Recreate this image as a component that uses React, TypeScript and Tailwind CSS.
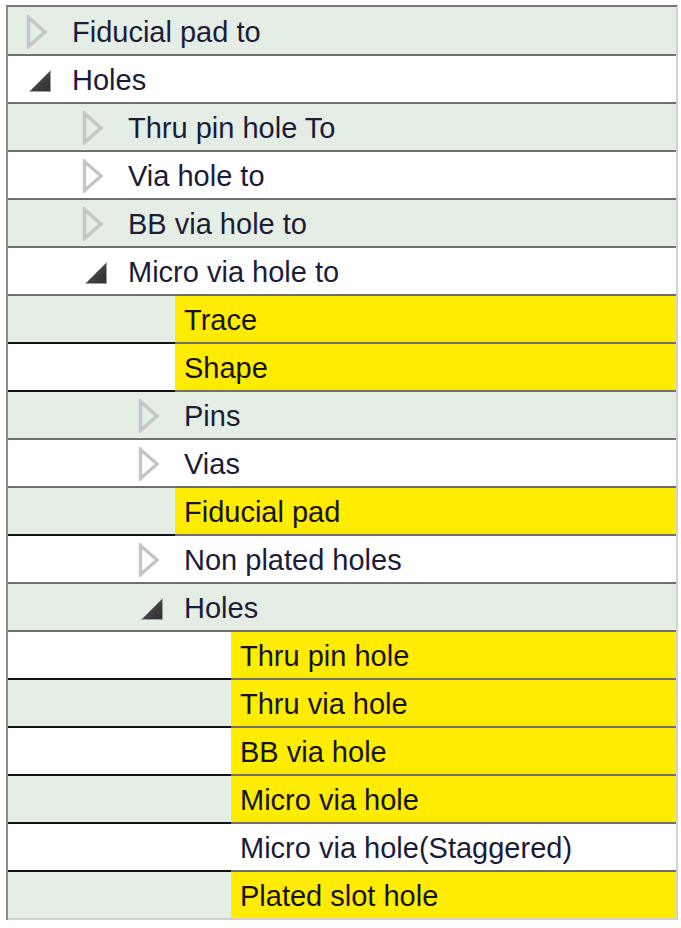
import React from 'react';

type Kind = 'closed' | 'open' | 'leaf';

interface Row {
  label: string;
  level: 0 | 1 | 2 | 3;
  kind: Kind;
  highlight?: boolean;
}

const ROWS: Row[] = [
  { label: 'Fiducial pad to', level: 0, kind: 'closed' },
  { label: 'Holes', level: 0, kind: 'open' },
  { label: 'Thru pin hole To', level: 1, kind: 'closed' },
  { label: 'Via hole to', level: 1, kind: 'closed' },
  { label: 'BB via hole to', level: 1, kind: 'closed' },
  { label: 'Micro via hole to', level: 1, kind: 'open' },
  { label: 'Trace', level: 2, kind: 'leaf', highlight: true },
  { label: 'Shape', level: 2, kind: 'leaf', highlight: true },
  { label: 'Pins', level: 2, kind: 'closed' },
  { label: 'Vias', level: 2, kind: 'closed' },
  { label: 'Fiducial pad', level: 2, kind: 'leaf', highlight: true },
  { label: 'Non plated holes', level: 2, kind: 'closed' },
  { label: 'Holes', level: 2, kind: 'open' },
  { label: 'Thru pin hole', level: 3, kind: 'leaf', highlight: true },
  { label: 'Thru via hole', level: 3, kind: 'leaf', highlight: true },
  { label: 'BB via hole', level: 3, kind: 'leaf', highlight: true },
  { label: 'Micro via hole', level: 3, kind: 'leaf', highlight: true },
  { label: 'Micro via hole(Staggered)', level: 3, kind: 'leaf' },
  { label: 'Plated slot hole', level: 3, kind: 'leaf', highlight: true },
];

const INDENT = ['pl-[17px]', 'pl-[73px]', 'pl-[129px]', 'pl-[185px]'];
const LEAF_GUTTER = ['w-[0px]', 'w-[55px]', 'w-[167px]', 'w-[223px]'];

const ClosedIcon = () => (
  <svg width="22" height="34" viewBox="0 0 22 34">
    <path d="M2.5 2.5 L19 17 L2.5 31.5 Z" fill="none" stroke="#c6c6c6" strokeWidth="3.5" strokeLinejoin="miter" />
  </svg>
);

const OpenIcon = () => (
  <svg width="24" height="24" viewBox="0 0 24 24">
    <defs>
      <linearGradient id="tri" x1="0" y1="0" x2="1" y2="1">
        <stop offset="0" stopColor="#5c5c5c" />
        <stop offset="1" stopColor="#2c2c2c" />
      </linearGradient>
    </defs>
    <polygon points="22.5,1.5 22.5,22.5 1.5,22.5" fill="url(#tri)" stroke="#a0a0a0" strokeWidth="1" />
  </svg>
);

export default function App() {
  return (
    <div className="min-h-screen bg-white pt-[5px] pl-[6px]" style={{ fontFamily: '"Liberation Sans", Arial, sans-serif' }}>
      <div className="w-[672px] border-t-2 border-l-2 border-r-2 border-t-[#767676] border-l-[#8c8c8c] border-r-[#d2d2d2]">
        {ROWS.map((row, i) => {
          const bg = i % 2 === 0 ? 'bg-[#e5eee4]' : 'bg-white';
          const last = i === ROWS.length - 1;
          const grayLine = last ? 'border-[#d2d2d2]' : 'border-[#6f6f6f]';
          const blackLine = last ? 'border-[#d2d2d2]' : 'border-[#111111]';
          const height = i === 0 ? 'h-[49px]' : 'h-[48px]';

          if (row.kind === 'leaf') {
            return (
              <div key={i} className={`flex ${height}`}>
                <div className={`${LEAF_GUTTER[row.level]} shrink-0 border-b-2 ${blackLine} ${bg}`} />
                <div
                  className={`flex-1 flex items-center pl-[9px] pt-[3px] border-b-2 ${grayLine} ${row.highlight ? 'bg-[#ffec00] text-[#141414]' : 'bg-white text-[#1c1c3a]'} text-[29px] leading-none`}
                >
                  {row.label}
                </div>
              </div>
            );
          }

          return (
            <div key={i} className={`flex items-center ${height} border-b-2 ${grayLine} ${bg} ${INDENT[row.level]}`}>
              <div className="w-[47px] shrink-0 flex items-center">
                {row.kind === 'closed' ? (
                  <div className="pl-[1px] pt-[2px]">
                    <ClosedIcon />
                  </div>
                ) : (
                  <div className="pl-[3px] pt-[4px]">
                    <OpenIcon />
                  </div>
                )}
              </div>
              <span className="text-[29px] leading-none pt-[3px] text-[#1c1c3a]">{row.label}</span>
            </div>
          );
        })}
      </div>
    </div>
  );
}
